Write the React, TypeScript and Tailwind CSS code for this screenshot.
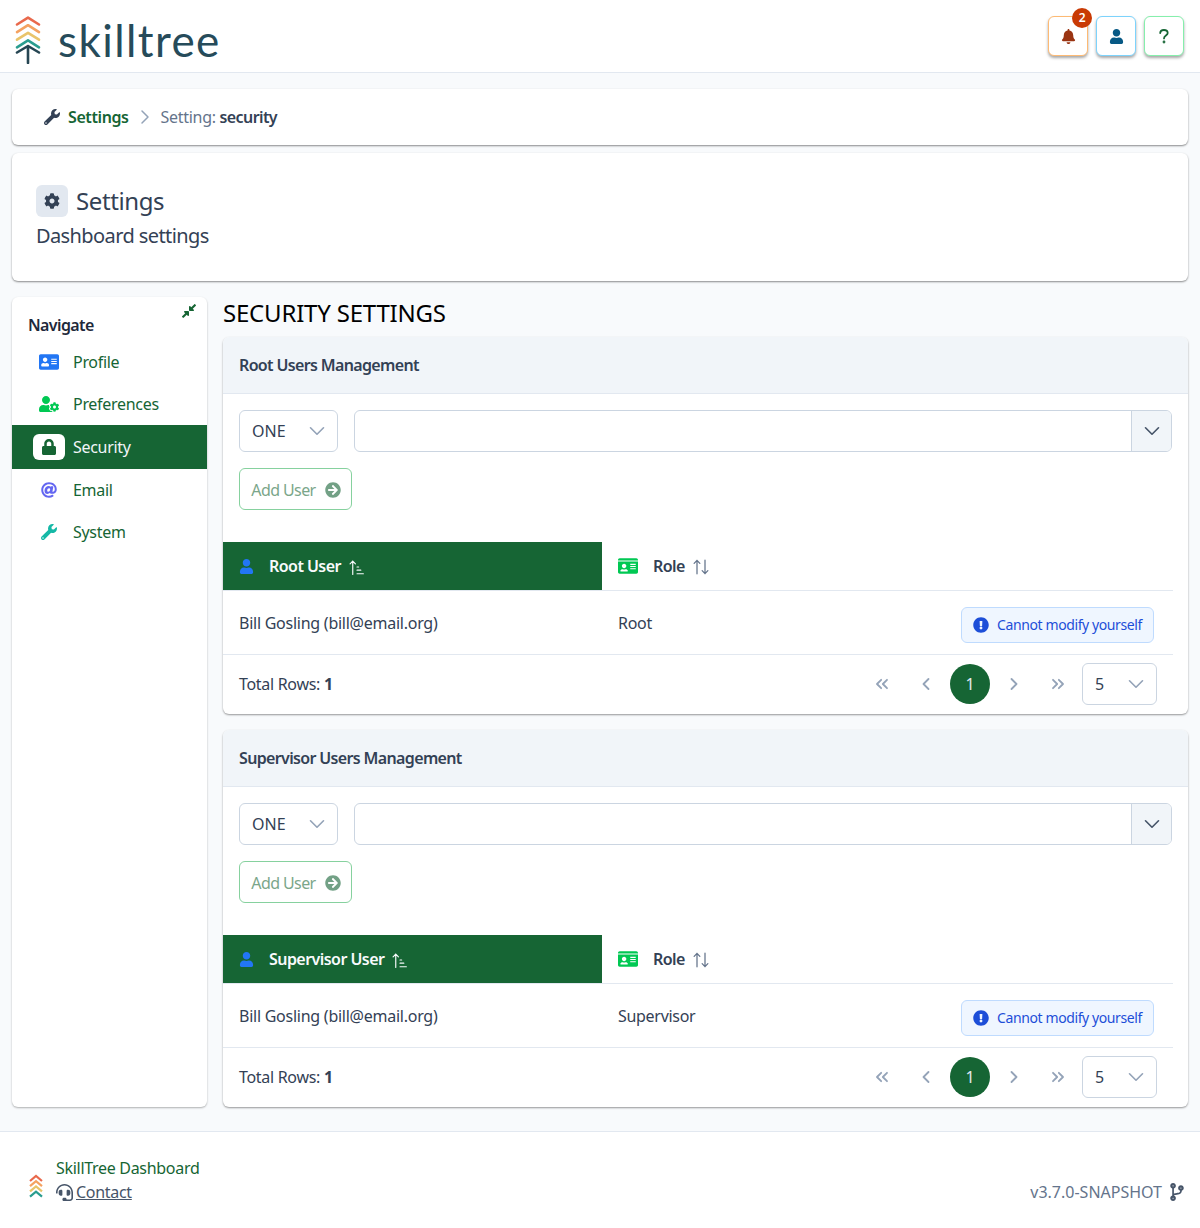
import React from "react";
import { FaWrench, FaCog, FaIdCard, FaAddressCard, FaUserCog, FaLock, FaAt, FaBell, FaUser, FaCompressAlt, FaArrowCircleRight, FaExclamationCircle, FaHeadset, FaCodeBranch } from "react-icons/fa";
import { LuChevronDown, LuChevronRight, LuChevronLeft, LuChevronsLeft, LuChevronsRight } from "react-icons/lu";

function Logo({ small }: { small?: boolean }) {
  const colors = ["#e9694c", "#f4a261", "#e9c46a", "#2a9d8f"];
  if (small) {
    return (
      <svg width="14" height="24" viewBox="0 0 14 24" fill="none" strokeWidth="2.2">
        {colors.map((c, i) => (
          <path key={c} d={`M1 ${7 + i * 5.2} L7 ${2 + i * 5.2} L13 ${7 + i * 5.2}`} stroke={c} />
        ))}
      </svg>
    );
  }
  return (
    <svg width="26" height="48" viewBox="0 0 26 48" fill="none" strokeWidth="2.6" strokeLinecap="round" strokeLinejoin="round">
      {colors.map((c, i) => (
        <path key={c} d={`M2 ${8.5 + i * 7.6} L13 ${1.6 + i * 7.6} L24 ${8.5 + i * 7.6}`} stroke={c} />
      ))}
      <path d="M2 36.5 L13 30 L24 36.5 M13 30 V47" stroke="#264653" />
    </svg>
  );
}

function SortAsc() {
  return (
    <svg width="15" height="15" viewBox="0 0 14 14" fill="none" stroke="currentColor" strokeWidth="1.1" strokeLinecap="round" strokeLinejoin="round">
      <path d="M3.5 13.5 V1 M1 3.6 L3.5 1 L6 3.6 M7.5 6.5 H9 M7.5 9.5 H11 M7.5 12.8 H13.4" />
    </svg>
  );
}

function SortBoth() {
  return (
    <svg width="16" height="16" viewBox="0 0 14 14" fill="none" stroke="currentColor" strokeWidth="1.1" strokeLinecap="round" strokeLinejoin="round">
      <path d="M3.5 13 V1.2 M1 3.8 L3.5 1.2 L6 3.8 M10.5 1 V12.8 M8 10.2 L10.5 12.8 L13 10.2" />
    </svg>
  );
}

function Question() {
  return (
    <svg width="10" height="15" viewBox="0 0 10 15" fill="none" stroke="currentColor" strokeWidth="1.8" strokeLinecap="round">
      <path d="M1.2 4 C1.3 2 2.8 1 4.9 1 C7.2 1 8.7 2.2 8.7 4 C8.7 6.6 5 6.6 5 9.4" />
      <circle cx="5" cy="13" r="0.5" fill="currentColor" />
    </svg>
  );
}

function HeaderButton({ border, color, children, badge }: { border: string; color: string; children: React.ReactNode; badge?: boolean }) {
  return (
    <div className={`relative flex h-10 w-10 items-center justify-center rounded-md border bg-white shadow-[0_2px_3px_rgba(0,0,0,0.35)] ${border} ${color}`}>
      {children}
      {badge && (
        <span className="absolute -right-[5px] -top-[9px] flex h-5 w-5 items-center justify-center rounded-full bg-[#c93a04] text-xs font-semibold text-white">2</span>
      )}
    </div>
  );
}

function NavItem({ icon, label, active, iconBox }: { icon: React.ReactNode; label: string; active?: boolean; iconBox?: boolean }) {
  return (
    <div className={`flex items-center ${active ? "h-[44px] bg-[#166534] text-[#f1f5f9]" : "h-[42px] text-[#166534]"}`}>
      <div className={iconBox ? "ml-[21px] mr-[8px] flex h-[26px] w-[32px] items-center justify-center rounded-md bg-white text-[#166534]" : "ml-[21px] mr-[8px] flex h-[26px] w-[32px] items-center justify-center"}>
        {icon}
      </div>
      <span className="text-base">{label}</span>
    </div>
  );
}

function Management({ title, userCol, role }: { title: string; userCol: string; role: string }) {
  return (
    <section className="overflow-hidden rounded-md bg-white shadow-[0_1px_2px_rgba(0,0,0,0.4)]">
      <div className="flex h-[57px] items-center border-b border-[#e2e8f0] bg-[#f1f5f9] px-4 font-semibold tracking-[-0.65px] text-[#334155]">{title}</div>
      <div className="p-4">
        <div className="flex gap-4">
          <div className="flex h-[42px] w-[99px] items-center justify-between rounded-md border border-[#cbd5e1] pl-3 pr-[7px] tracking-normal text-[#334155]">
            <span>ONE</span>
            <LuChevronDown className="text-[#94a3b8]" size={26} strokeWidth={1.5} />
          </div>
          <div className="flex h-[42px] flex-1 overflow-hidden rounded-md border border-[#cbd5e1]">
            <div className="flex-1" />
            <div className="flex w-10 items-center justify-center border-l border-[#cbd5e1] bg-[#f1f5f9] text-[#475569]">
              <LuChevronDown size={26} strokeWidth={1.5} />
            </div>
          </div>
        </div>
        <div className="mt-4 flex h-[42px] w-[113px] items-center justify-center gap-[9px] rounded-md border border-[#86d19e] pl-[1px] pt-[1px] tracking-[-0.6px] text-[#7ba68a]">
          <span>Add User</span>
          <FaArrowCircleRight size={16} className="text-[#73a186]" />
        </div>
      </div>
      <div className="mr-[15px] mt-4 text-[#334155]">
        <div className="flex h-[49px] border-b border-[#e2e8f0]">
          <div className="flex h-[48px] w-[379px] items-center bg-[#166534] pl-4 font-semibold tracking-[-0.55px] text-[#f8fafc]">
            <FaUser size={15} className="mr-[15px] text-[#2276f4]" />
            <span>{userCol}</span>
            <span className="ml-2 mt-[2px]"><SortAsc /></span>
          </div>
          <div className="flex h-[48px] flex-1 items-center pl-4 font-semibold tracking-[-0.55px]">
            <FaIdCard size={20} className="mr-[15px] text-[#00c853]" />
            <span>Role</span>
            <span className="ml-2 mt-[1px] text-[#64748b]"><SortBoth /></span>
          </div>
        </div>
        <div className="flex h-[64px] items-center border-b border-[#e2e8f0]">
          <div className="w-[379px] pl-4 tracking-[-0.25px]">Bill Gosling (bill@email.org)</div>
          <div className="flex-1 pl-4">{role}</div>
          <div className="mr-[19px] mt-[4px] flex h-[36px] w-[193px] items-center justify-center gap-2 rounded-md border border-[#bfdbfe] bg-[#eff6ff] text-sm tracking-[-0.4px] text-[#1d4ed8]">
            <FaExclamationCircle size={16} />
            <span>Cannot modify yourself</span>
          </div>
        </div>
        <div className="flex h-[59px] items-center pb-[2px] pl-4">
          <div className="flex-1">Total Rows: <b className="font-bold">1</b></div>
          <div className="mr-[16px] flex items-center text-[#94a3b8]">
            <div className="flex w-11 justify-center pr-[4px]"><LuChevronsLeft size={20} strokeWidth={2.2} /></div>
            <div className="flex w-11 justify-center pr-[4px]"><LuChevronLeft size={20} strokeWidth={2.2} /></div>
            <div className="flex h-10 w-10 items-center justify-center rounded-full bg-[#166534] text-[#e2e8f0]">1</div>
            <div className="flex w-12 justify-center"><LuChevronRight size={20} strokeWidth={2.2} /></div>
            <div className="flex w-10 justify-center"><LuChevronsRight size={20} strokeWidth={2.2} /></div>
            <div className="ml-[4px] flex h-[42px] w-[75px] items-center justify-between rounded-md border border-[#cbd5e1] pl-3 pr-[7px] text-[#334155]">
              <span>5</span>
              <LuChevronDown className="text-[#94a3b8]" size={26} strokeWidth={1.5} />
            </div>
          </div>
        </div>
      </div>
    </section>
  );
}

export default function App() {
  return (
    <div className="flex min-h-[1228px] flex-col bg-[#f8fafc] text-base tracking-[-0.3px] text-[#334155] [font-family:'Noto_Sans',sans-serif]">
      <header className="flex h-[73px] items-center justify-between border-b border-[#e2e8f0] bg-white pl-[15px] pr-[16px]">
        <div className="flex items-center pt-[7px]">
          <Logo />
          <span className="ml-[17px] text-[44px] leading-none tracking-[1.4px] text-[#264b5a] [font-family:Lato,sans-serif]">skilltree</span>
        </div>
        <div className="flex gap-[8px]">
          <HeaderButton border="border-[#fdba74]" color="text-[#9a3412]" badge><FaBell size={15} /></HeaderButton>
          <HeaderButton border="border-[#7dd3fc]" color="text-[#075985]"><FaUser size={15} /></HeaderButton>
          <HeaderButton border="border-[#86efac]" color="text-[#166534]"><Question /></HeaderButton>
        </div>
      </header>

      <main className="flex flex-1 flex-col px-3 pt-4">
        <div className="flex h-[56px] items-center rounded-md bg-white pl-8 shadow-[0_1px_2px_rgba(0,0,0,0.45)]">
          <FaWrench size={16} className="mr-[8px] text-[#334155]" />
          <span className="font-semibold tracking-[-0.4px] text-[#166534]">Settings</span>
          <LuChevronRight size={24} strokeWidth={1.5} className="mx-[4px] text-[#94a3b8]" />
          <span className="text-[#64748b]">Setting:&nbsp;</span>
          <span className="font-semibold tracking-[-0.6px] text-[#334155]">security</span>
        </div>

        <div className="mt-2 h-[128px] rounded-md bg-white pl-6 pt-8 shadow-[0_1px_2px_rgba(0,0,0,0.45)]">
          <div className="flex items-center">
            <div className="mr-2 flex h-8 w-8 items-center justify-center rounded-md bg-[#e2e8f0]"><FaCog size={16} /></div>
            <span className="text-2xl tracking-[-0.4px]">Settings</span>
          </div>
          <div className="mt-[5px] text-xl leading-[28px] tracking-[-0.6px]">Dashboard settings</div>
        </div>

        <div className="mt-4 flex gap-4">
          <aside className="relative h-[810px] w-[195px] shrink-0 rounded-md bg-white pt-[16px] shadow-[0_1px_2px_rgba(0,0,0,0.3)]">
            <FaCompressAlt size={16} className="absolute right-[10px] top-[6px] text-[#166534]" />
            <div className="pl-4 font-semibold tracking-[-0.6px] text-[#1e293b]">Navigate</div>
            <div className="mt-[4px]">
              <NavItem label="Profile" icon={<FaAddressCard size={20} className="text-[#2276f4]" />} />
              <NavItem label="Preferences" icon={<FaUserCog size={20} className="text-[#00c853]" />} />
              <NavItem label="Security" active iconBox icon={<FaLock size={16} />} />
              <NavItem label="Email" icon={<FaAt size={16} className="text-[#6366f1]" />} />
              <NavItem label="System" icon={<FaWrench size={16} className="text-[#14b8a6]" />} />
            </div>
          </aside>
          <div className="flex flex-1 flex-col">
            <h1 className="h-[40px] text-2xl leading-[32px] tracking-[-0.2px] text-black">SECURITY SETTINGS</h1>
            <div className="flex flex-col gap-4">
              <Management title="Root Users Management" userCol="Root User" role="Root" />
              <Management title="Supervisor Users Management" userCol="Supervisor User" role="Supervisor" />
            </div>
          </div>
        </div>
      </main>

      <footer className="mt-6 flex h-[97px] items-end justify-between border-t border-[#e2e8f0] bg-white pb-[24px] pl-[29px] pr-[14px]">
        <div className="flex items-end">
          <div className="mb-[6px]"><Logo small /></div>
          <div className="ml-[13px]">
            <div className="leading-6 text-[#166534]">SkillTree Dashboard</div>
            <div className="flex items-center leading-6 text-[#475569]">
              <FaHeadset size={17} className="mr-[3px]" />
              <span className="underline">Contact</span>
            </div>
          </div>
        </div>
        <div className="flex items-center tracking-normal text-[#64748b]">
          <span>v3.7.0-SNAPSHOT</span>
          <FaCodeBranch size={18} className="ml-[6px] text-[#475569]" />
        </div>
      </footer>
    </div>
  );
}
